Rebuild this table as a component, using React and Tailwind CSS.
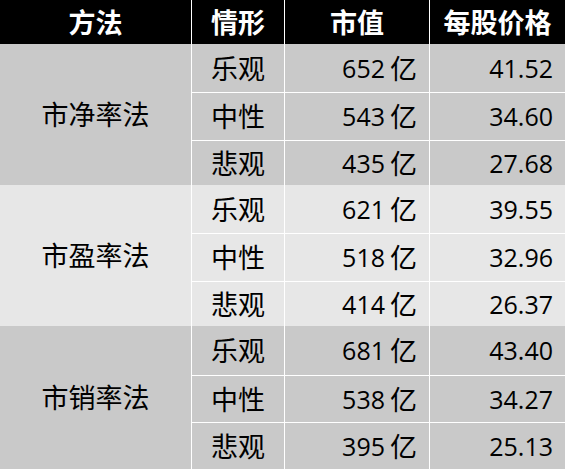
import React from "react";

const groups = [
  {
    name: "市净率法",
    bg: "bg-[#c9c9c9]",
    rows: [
      ["乐观", "652", "41.52"],
      ["中性", "543", "34.60"],
      ["悲观", "435", "27.68"],
    ],
    h: ["h-[48px]", "h-[48px]", "h-[45px]"],
  },
  {
    name: "市盈率法",
    bg: "bg-[#e7e7e7]",
    rows: [
      ["乐观", "621", "39.55"],
      ["中性", "518", "32.96"],
      ["悲观", "414", "26.37"],
    ],
    h: ["h-[48px]", "h-[48px]", "h-[45px]"],
  },
  {
    name: "市销率法",
    bg: "bg-[#c9c9c9]",
    rows: [
      ["乐观", "681", "43.40"],
      ["中性", "538", "34.27"],
      ["悲观", "395", "25.13"],
    ],
    h: ["h-[49px]", "h-[47px]", "h-[47px]"],
  },
];

const font = { fontFamily: '"Open Sans", "Noto Sans CJK SC", sans-serif' };

export default function App() {
  return (
    <div
      className="w-[565px] h-[469px] overflow-hidden bg-white text-black text-[25px] leading-none"
      style={font}
    >
      <div className="flex h-[44px] bg-black text-white font-bold text-[27px]">
        <div className="w-[191px] flex items-center justify-center">方法</div>
        <div className="w-[93px] border-l border-white flex items-center justify-center">情形</div>
        <div className="w-[145px] border-l border-white flex items-center justify-center">市值</div>
        <div className="flex-1 border-l border-white flex items-center justify-center">每股价格</div>
      </div>
      {groups.map((g) => (
        <div key={g.name} className={`flex ${g.bg}`}>
          <div className="w-[191px] flex items-center justify-center text-[27px]">{g.name}</div>
          <div className="flex-1 flex flex-col">
            {g.rows.map((r, i) => (
              <div
                key={r[0]}
                className={`flex ${g.h[i]} ${i > 0 ? "border-t border-white" : ""}`}
              >
                <div className="w-[93px] border-l border-white flex items-center justify-center text-[27px]">
                  {r[0]}
                </div>
                <div className="w-[145px] border-l border-white flex items-center justify-end pr-[12px]">
                  {r[1]}
                  <span className="ml-[5px] text-[27px]">亿</span>
                </div>
                <div className="flex-1 border-l border-white flex items-center justify-end pr-[12px]">
                  {r[2]}
                </div>
              </div>
            ))}
          </div>
        </div>
      ))}
    </div>
  );
}
